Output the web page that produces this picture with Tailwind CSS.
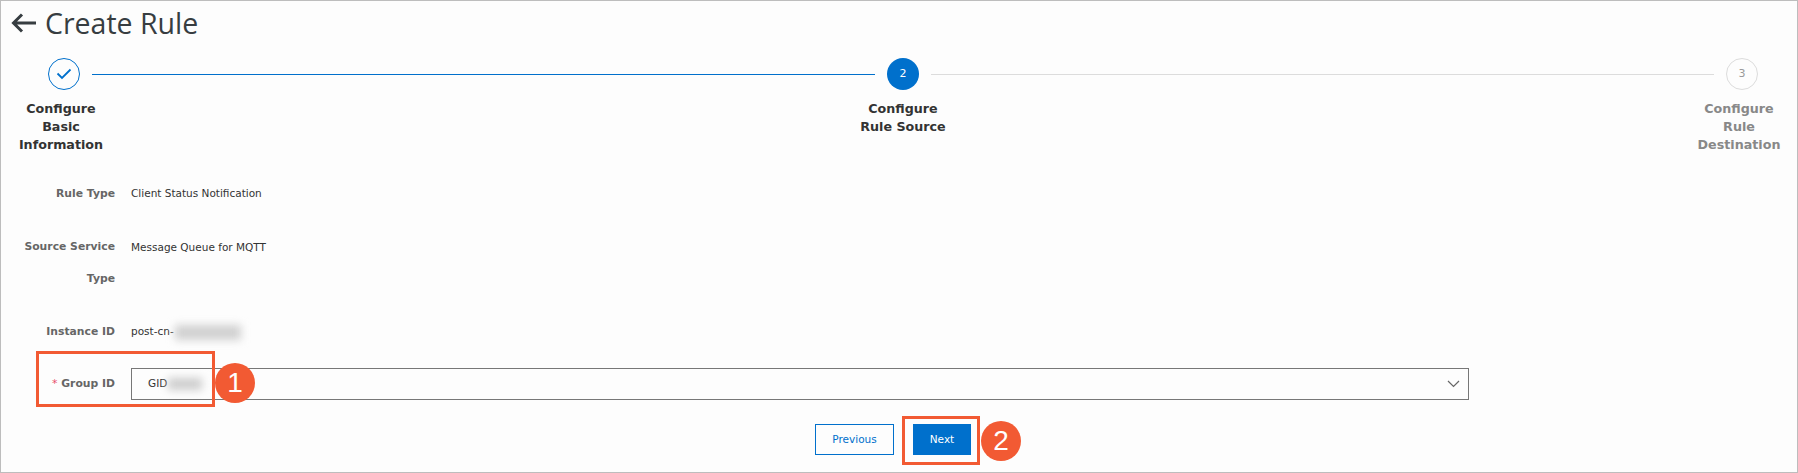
<!DOCTYPE html>
<html>
<head>
<meta charset="utf-8">
<script src="https://cdn.jsdelivr.net/npm/@tailwindcss/browser@4"></script>
</head>
<body class="m-0 bg-[#fdfdfd]">
<div class="relative w-[1798px] h-[473px] overflow-hidden border border-[#bdbdbd] bg-[#fdfdfd] font-['Open_Sans',sans-serif] text-[#333]">
  <div class="flex items-center h-[43px] pl-[10px] gap-[9px]">
    <svg width="25" height="20" viewBox="0 0 25 20" fill="none" stroke="#373d41" stroke-width="3"><path d="M25 10H2.500M11 1.500L2.500 10l8.500 8.500"/></svg>
    <span class="text-[28.500px] leading-[36px] text-[#373d41]">Create Rule</span>
  </div>

  <div class="pt-[14px] pl-[17px] pr-[15px]">
    <div class="flex items-center pl-[30px] pr-[24px] h-[32px]">
      <div class="w-[32px] h-[32px] shrink-0 rounded-full border border-[#0070cc] flex items-center justify-center">
        <svg width="16" height="12" viewBox="0 0 16 12" fill="none" stroke="#0070cc" stroke-width="1.800"><path d="M1.500 5.500L6 10l8.500-8.500"/></svg>
      </div>
      <div class="flex-1 h-[1px] bg-[#0070cc] mx-[12px]"></div>
      <div class="w-[32px] h-[32px] shrink-0 rounded-full bg-[#0070cc] text-white text-[11px] flex items-center justify-center font-['DejaVu_Sans',sans-serif]">2</div>
      <div class="flex-1 h-[1px] bg-[#dcdcdc] mx-[12px]"></div>
      <div class="w-[32px] h-[32px] shrink-0 rounded-full border border-[#dcdcdc] text-[#999] text-[11px] flex items-center justify-center font-['DejaVu_Sans',sans-serif]">3</div>
    </div>
    <div class="flex justify-between pt-[10px] font-['DejaVu_Sans',sans-serif] font-bold text-[12.700px] leading-[18px] text-center whitespace-nowrap">
      <div class="w-[86px] text-[#333]">Configure<br>Basic<br>Information</div>
      <div class="w-[86px] text-[#333] ml-[6px]">Configure<br>Rule Source</div>
      <div class="w-[86px] text-[#888]">Configure<br>Rule<br>Destination</div>
    </div>
  </div>

  <div class="pt-[24px] font-['DejaVu_Sans',sans-serif] text-[10.500px]">
    <div class="flex items-center h-[32px] gap-[16px]">
      <div class="w-[114px] text-right font-bold text-[#666] text-[10.800px]">Rule Type</div>
      <div class="text-[#333]">Client Status Notification</div>
    </div>
    <div class="flex items-start mt-[21px] gap-[16px] leading-[32px]">
      <div class="w-[114px] text-right font-bold text-[#666] text-[10.800px]">Source Service<br>Type</div>
      <div class="text-[#333]">Message Queue for MQTT</div>
    </div>
    <div class="flex items-center h-[32px] mt-[21px] gap-[16px]">
      <div class="w-[114px] text-right font-bold text-[#666] text-[10.800px]">Instance ID</div>
      <div class="flex items-center text-[#333]">post-cn-<span class="w-[66px] h-[15px] ml-[1px] bg-[#d0d0d0] blur-[4px]"></span></div>
    </div>
    <div class="flex items-center h-[32px] mt-[20px] gap-[16px]">
      <div class="w-[114px] text-right font-bold text-[#666] text-[10.800px]"><span class="text-[#e84e6a] font-normal">*</span> Group ID</div>
      <div class="w-[1338px] h-[32px] border border-[#777] flex items-center justify-between pl-[16px] pr-[8px] text-[#333]">
        <div class="flex items-center">GID<span class="w-[34px] h-[12px] ml-[1px] bg-[#cccccc] blur-[4px]"></span></div>
        <svg width="13" height="8" viewBox="0 0 13 8" fill="none" stroke="#666" stroke-width="1.200"><path d="M1 1l5.500 5.500L12 1"/></svg>
      </div>
    </div>
    <div class="flex justify-center gap-[19px] mt-[24px] pr-[12px]">
      <button class="w-[79px] h-[31px] border border-[#0070cc] text-[#0070cc] bg-transparent">Previous</button>
      <button class="w-[58px] h-[31px] bg-[#0070cc] text-white">Next</button>
    </div>
  </div>

  <div class="absolute left-[35px] top-[350px] w-[179px] h-[56px] border-[3px] border-[#f25a33]"></div>
  <div class="absolute left-[214px] top-[362px] w-[40px] h-[40px] rounded-full bg-[#f25a33] text-white text-[28px] flex items-center justify-center font-['Liberation_Sans',sans-serif]">1</div>
  <div class="absolute left-[901px] top-[415px] w-[78px] h-[49px] border-[3px] border-[#f25a33]"></div>
  <div class="absolute left-[980px] top-[420px] w-[40px] h-[40px] rounded-full bg-[#f25a33] text-white text-[28px] flex items-center justify-center font-['Liberation_Sans',sans-serif]">2</div>
</div>
</body>
</html>
